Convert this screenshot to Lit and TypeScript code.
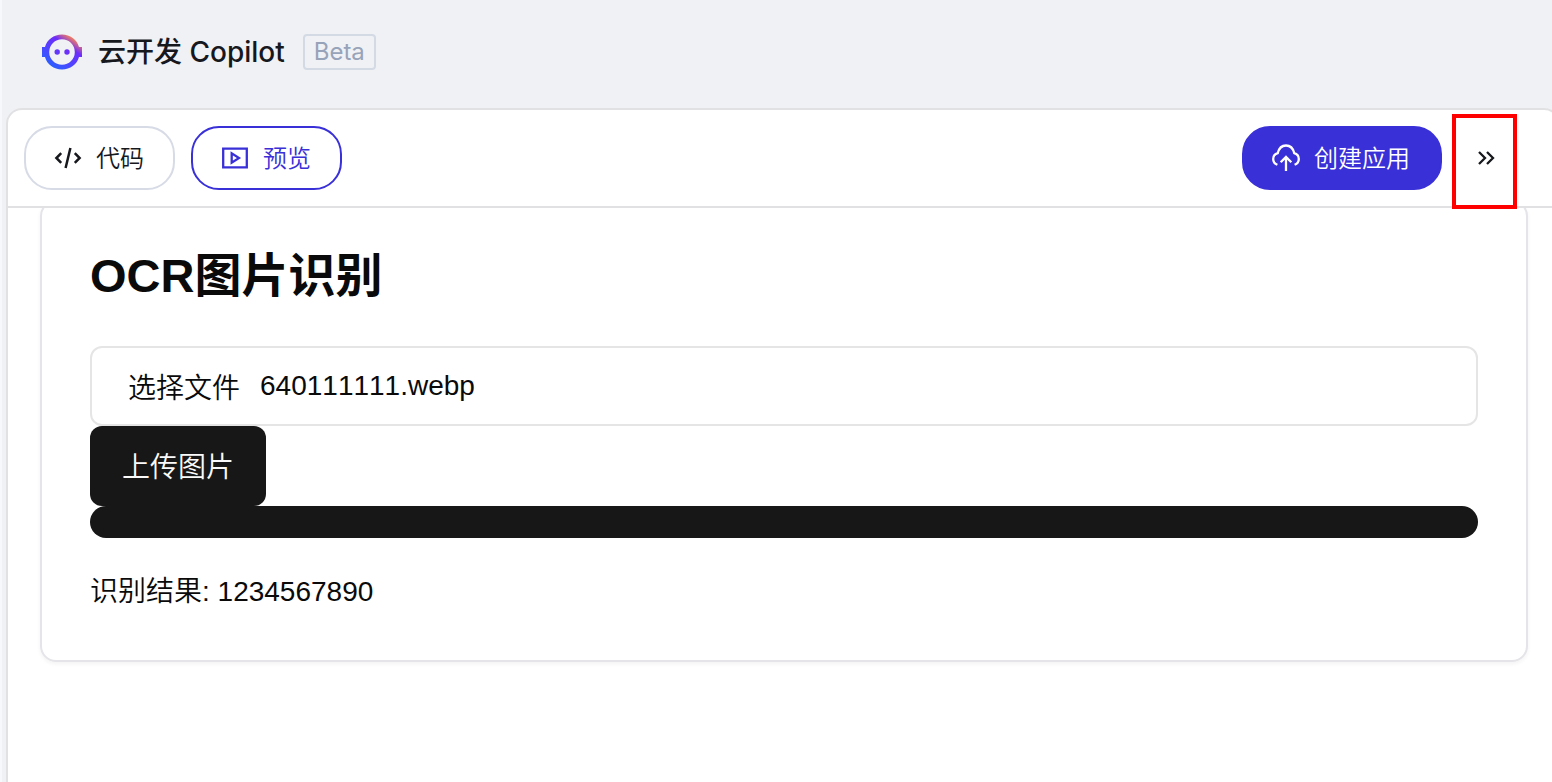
import { LitElement, html, css } from "lit";
import { customElement, state } from "lit/decorators.js";

@customElement("app-root")
export class AppRoot extends LitElement {
  static styles = css`
    :host {
      display: block;
      box-sizing: border-box;
      height: 100vh;
      overflow: hidden;
      background: #f0f1f5;
      border-left: 2px solid #f7f8fb;
      color: #0a0a0a;
      font-family: "Liberation Sans", "Noto Sans CJK SC", sans-serif;
      font-size: 28px;
      font-weight: 350;
      font-kerning: none;
    }
    * {
      box-sizing: border-box;
    }
    button {
      font: inherit;
      cursor: pointer;
    }
    svg {
      display: block;
      flex: none;
    }
    .page {
      display: flex;
      flex-direction: column;
      height: 100%;
    }
    .header {
      display: flex;
      align-items: center;
      flex: none;
      padding: 32px 40px 36px;
      font-family: Inter, "Noto Sans CJK SC", sans-serif;
    }
    .brand {
      margin: 0 18px 0 16px;
      font-size: 28px;
      font-weight: 500;
      line-height: 40px;
      color: #16181d;
    }
    .beta {
      padding: 0 9px;
      border: 2px solid #d3dae4;
      border-radius: 4px;
      font-size: 24px;
      font-weight: 400;
      line-height: 32px;
      color: #97a3b9;
    }
    .panel {
      display: flex;
      flex-direction: column;
      flex: 1;
      min-height: 0;
      margin: 0 -8px 0 4px;
      border: 2px solid #e1e1e3;
      border-bottom: 0;
      border-radius: 16px 16px 0 0;
      background: #fff;
    }
    .toolbar {
      display: flex;
      align-items: center;
      gap: 16px;
      flex: none;
      padding: 16px 44px 16px 16px;
      border-bottom: 2px solid #e1e1e3;
    }
    .pill {
      display: flex;
      align-items: center;
      gap: 14px;
      height: 64px;
      padding: 0 29px 0 28px;
      border: 2px solid #d7dbe6;
      border-radius: 28px;
      background: #fff;
      color: #16181d;
      font-size: 24px;
      line-height: 32px;
    }
    .pill span {
      padding-top: 2px;
    }
    .pill.active {
      border-color: #3a30d8;
      color: #3a30d8;
    }
    .pill.primary {
      margin-left: auto;
      padding: 0 30px 0 28px;
      border-color: #3a30d8;
      background: #3a30d8;
      color: #fff;
    }
    .collapse {
      position: relative;
      display: flex;
      align-items: center;
      justify-content: center;
      width: 56px;
      height: 64px;
      padding: 0;
      border: 0;
      background: none;
      color: #16181d;
    }
    .marker {
      position: absolute;
      inset: -12px -3px -19px -6px;
      border: 4px solid #ff0000;
      pointer-events: none;
    }
    .content {
      flex: 1;
      min-height: 0;
      padding: 0 30px 0 32px;
      overflow: hidden;
    }
    .card {
      margin-top: -8px;
      padding: 42px 48px 48px;
      border: 2px solid #e4e4e9;
      border-radius: 16px;
      box-shadow: 0 2px 4px rgba(0, 0, 0, 0.05);
    }
    .title {
      margin: 0 0 38px;
      font-size: 47px;
      font-weight: 700;
      line-height: 64px;
    }
    .file {
      display: flex;
      align-items: center;
      gap: 20px;
      height: 80px;
      padding: 0 36px;
      border: 2px solid #e5e5e5;
      border-radius: 12px;
      cursor: pointer;
    }
    .native {
      position: absolute;
      width: 1px;
      height: 1px;
      overflow: hidden;
      opacity: 0;
    }
    .upload {
      display: block;
      height: 80px;
      padding: 0 32px 2px;
      border: 0;
      border-radius: 12px;
      background: #171717;
      color: #fafafa;
    }
    .progress {
      height: 32px;
      border-radius: 16px;
      background: #171717;
    }
    .result {
      margin: 32px 0 0;
      padding-top: 2px;
      line-height: 40px;
    }
  `;

  @state() private fileName = "640111111.webp";
  @state() private result = "1234567890";

  private pickFile(e: Event) {
    const file = (e.target as HTMLInputElement).files?.[0];
    if (file) this.fileName = file.name;
  }

  render() {
    return html`
      <div class="page">
        <header class="header">
          <svg width="40" height="36" viewBox="0 0 40 36" aria-hidden="true">
            <defs>
              <linearGradient id="ring" x1="8" y1="34" x2="29" y2="3" gradientUnits="userSpaceOnUse">
                <stop offset="0" stop-color="#2563ff" />
                <stop offset="0.5" stop-color="#5a3cff" />
                <stop offset="0.75" stop-color="#6d2cfa" />
                <stop offset="1" stop-color="#ef7d62" />
              </linearGradient>
            </defs>
            <path fill="url(#ring)" fill-rule="evenodd" d="M20 0.500C28.200 0.500 34.900 5.400 37 13H40V23H37C34.900 30.600 28.200 35.500 20 35.500S5.100 30.600 3 23H0V13H3C5.100 5.400 11.800 0.500 20 0.500ZM20 5.200A12.800 12.800 0 1 0 20 30.800A12.800 12.800 0 1 0 20 5.200Z" />
            <circle cx="15.200" cy="18" r="2.700" fill="#6236fb" />
            <circle cx="25" cy="18" r="2.700" fill="#6a30fa" />
          </svg>
          <span class="brand">云开发 Copilot</span>
          <span class="beta">Beta</span>
        </header>
        <main class="panel">
          <div class="toolbar">
            <button class="pill" type="button">
              <svg width="28" height="28" viewBox="0 0 28 28" fill="none" stroke="currentColor" stroke-width="2.500" aria-hidden="true">
                <path d="M7.200 9.200L2.400 14l4.800 4.800M20.800 9.200L25.600 14l-4.800 4.800M16.400 4L11.600 24" />
              </svg>
              <span>代码</span>
            </button>
            <button class="pill active" type="button">
              <svg width="28" height="28" viewBox="0 0 28 28" fill="none" stroke="currentColor" stroke-width="2.300" aria-hidden="true">
                <path d="M2.200 4.700H25.800V23.300H2.200ZM10.700 9.300V18.700L18 14Z" />
              </svg>
              <span>预览</span>
            </button>
            <button class="pill primary" type="button">
              <svg width="28" height="28" viewBox="0 0 28 28" fill="none" stroke="currentColor" stroke-width="2.300" aria-hidden="true">
                <path d="M5.400 20.800C2.800 19.800 1.200 17.700 1.200 15C1.200 12.100 3.100 9.800 5.800 9.100C6.900 4.500 10 1.500 14 1.500S21.100 4.500 22.200 9.100C24.900 9.800 26.800 12.100 26.800 15C26.800 17.700 25.200 19.800 22.600 20.800M14 27V13M8.700 18.200L14 12.900L19.300 18.200" />
              </svg>
              <span>创建应用</span>
            </button>
            <button class="collapse" type="button" aria-label="收起">
              <svg width="18" height="14" viewBox="0 0 18 14" fill="none" stroke="currentColor" stroke-width="2.300" aria-hidden="true">
                <path d="M2 1L8 7L2 13M10 1L16 7L10 13" />
              </svg>
              <span class="marker"></span>
            </button>
          </div>
          <div class="content">
            <section class="card">
              <h1 class="title">OCR图片识别</h1>
              <label class="file">
                <input class="native" type="file" accept="image/*" @change=${this.pickFile} />
                <span>选择文件</span>
                <span>${this.fileName}</span>
              </label>
              <button class="upload" type="button">上传图片</button>
              <div class="progress" role="progressbar" aria-label="上传进度" aria-valuenow="100"></div>
              <p class="result">识别结果: ${this.result}</p>
            </section>
          </div>
        </main>
      </div>
    `;
  }
}
